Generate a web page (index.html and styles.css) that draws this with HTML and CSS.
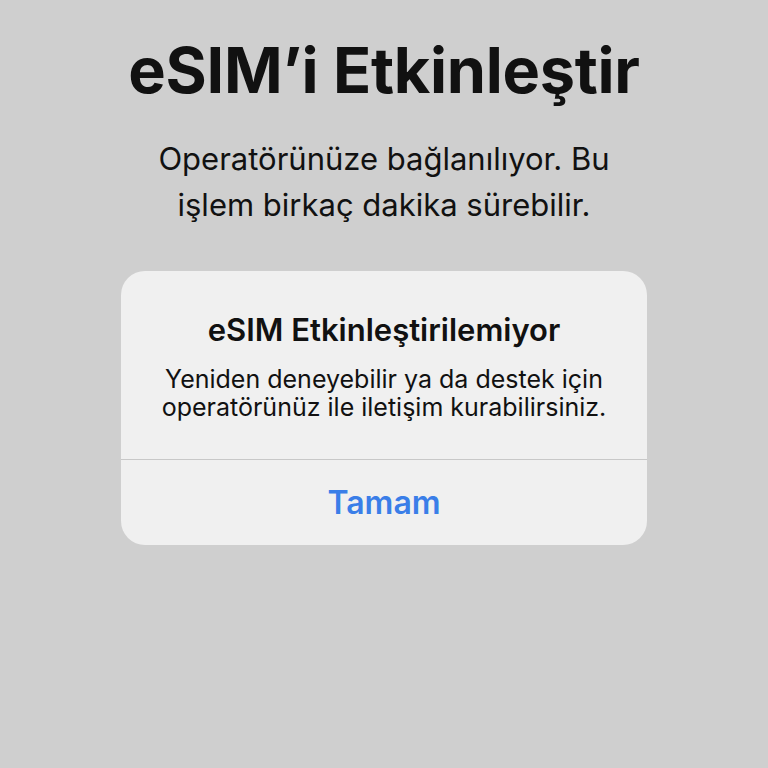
FILE: index.html
```html
<!DOCTYPE html>
<html lang="tr">
<head>
<meta charset="utf-8">
<link rel="stylesheet" href="styles.css">
</head>
<body>
<main class="screen">
  <h1 class="title">eSIM’i Etkinleştir</h1>
  <p class="subtitle">Operatörünüze bağlanılıyor. Bu<br>işlem birkaç dakika sürebilir.</p>
  <div class="alert">
    <div class="alert-body">
      <h2 class="alert-title">eSIM Etkinleştirilemiyor</h2>
      <p class="alert-text">Yeniden deneyebilir ya da destek için<br>operatörünüz ile iletişim kurabilirsiniz.</p>
    </div>
    <div class="alert-button">Tamam</div>
  </div>
</main>
</body>
</html>
```
FILE: styles.css
```css
html, body {
  margin: 0;
  padding: 0;
  background: #cfcfcf;
}
.screen {
  width: 768px;
  height: 768px;
  display: flex;
  flex-direction: column;
  align-items: center;
  font-family: Inter, "Noto Sans", sans-serif;
  color: #111;
}
.title {
  margin: 32px 0 0;
  font-size: 63px;
  font-weight: 700;
  letter-spacing: -0.3px;
  line-height: 76px;
}
.subtitle {
  margin: 28px 0 0;
  font-size: 31px;
  font-weight: 400;
  line-height: 46px;
  text-align: center;
}
.alert {
  margin-top: 43px;
  width: 526px;
  background: #f0f0f0;
  border-radius: 24px;
  overflow: hidden;
  display: flex;
  flex-direction: column;
}
.alert-body {
  padding: 39px 16px 38px;
  text-align: center;
  border-bottom: 1px solid #c8c8c8;
}
.alert-title {
  margin: 0;
  font-size: 31px;
  font-weight: 600;
  line-height: 40px;
}
.alert-text {
  margin: 15px 0 0;
  font-size: 25px;
  line-height: 28px;
}
.alert-button {
  height: 85px;
  display: flex;
  align-items: center;
  justify-content: center;
  font-size: 32px;
  font-weight: 600;
  color: #3a7ee8;
}
```
